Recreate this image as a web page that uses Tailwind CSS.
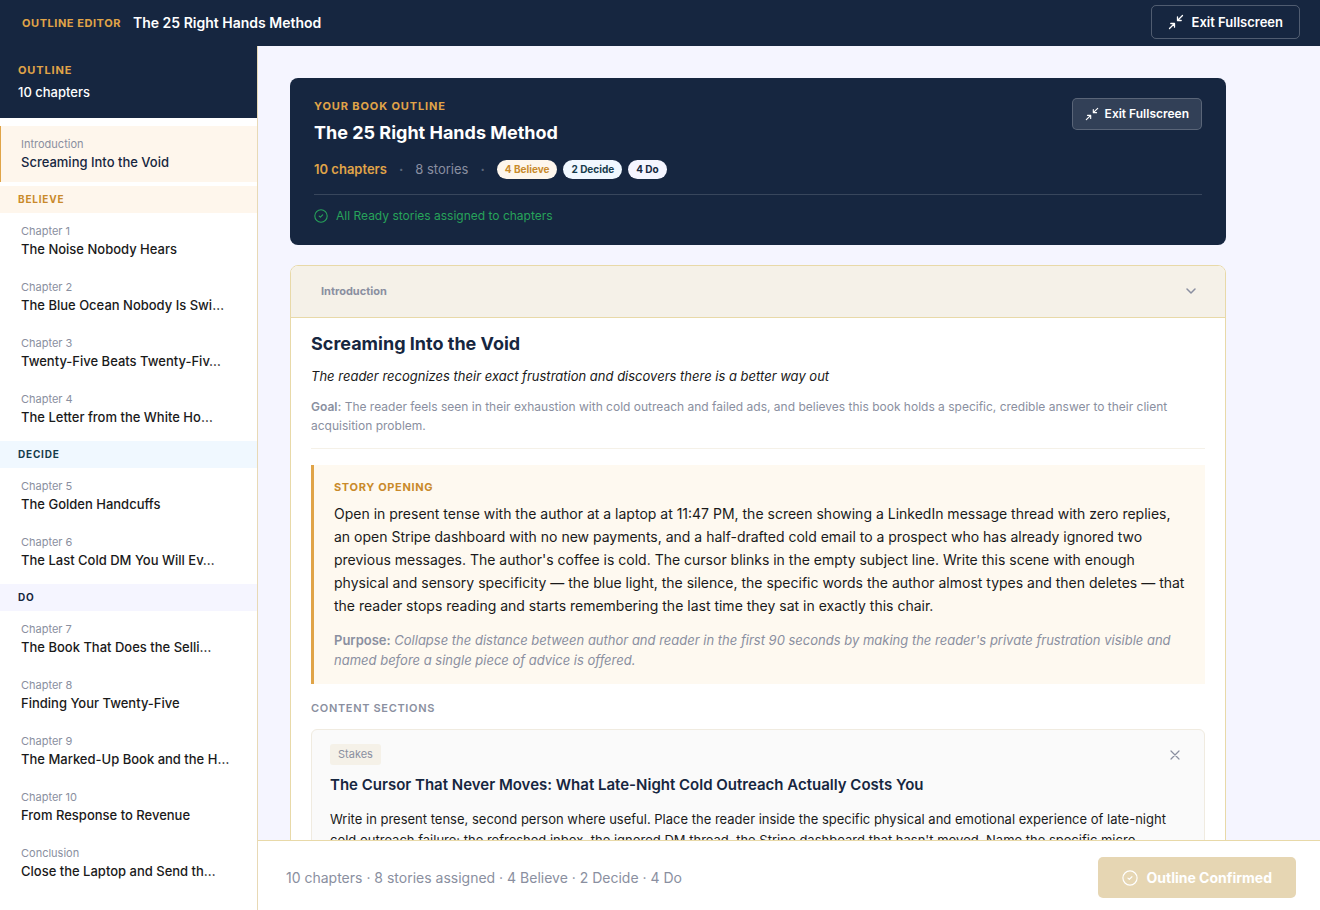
<!DOCTYPE html>
<html lang="en">
<head>
<meta charset="utf-8">
<meta name="viewport" content="width=device-width, initial-scale=1">
<title>Outline Editor</title>
<script src="https://cdn.jsdelivr.net/npm/@tailwindcss/browser@4"></script>
</head>
<body class="flex h-screen flex-col overflow-hidden bg-[#f5f5ff] font-[Inter,sans-serif] text-[#1a1a1a]">

<header class="flex h-[46px] shrink-0 items-center justify-between bg-[#162640] pr-5 pl-[22px]">
  <div class="flex items-center gap-3">
    <span class="text-[11px] leading-4 font-bold tracking-[0.55px] text-[#e0a448]">OUTLINE EDITOR</span>
    <span class="text-[14px] leading-5 font-semibold text-white">The 25 Right Hands Method</span>
  </div>
  <button type="button" class="-mt-0.5 flex h-[34px] items-center gap-2 rounded-[5px] border border-white/25 px-4 text-[13px] leading-5 font-semibold text-white">
    <svg class="size-4" viewBox="0 0 16 16" fill="none" stroke="currentColor" stroke-width="1.3" stroke-linecap="round" stroke-linejoin="round" aria-hidden="true"><path d="M1.500 14.500 6.500 9.500M2.800 9.500h3.700v3.700M14.500 1.500 9.500 6.500M9.500 2.800v3.700h3.700"/></svg>
    Exit Fullscreen
  </button>
</header>

<div class="flex min-h-0 flex-1">
  <aside class="w-[258px] shrink-0 overflow-y-auto border-r border-[#e8d9b5] bg-white [scrollbar-width:none]">
    <div class="h-[72px] bg-[#162640] px-[18px] pt-4">
      <div class="text-[11px] leading-4 font-bold tracking-[0.88px] text-[#e0a448]">OUTLINE</div>
      <div class="mt-1 text-[13px] leading-5 font-medium text-white">10 chapters</div>
    </div>
    <nav class="pt-2" aria-label="Chapters">
      <a href="#" aria-current="true" class="block h-14 border-l border-[#e0a448] bg-[#fef6ec] pt-[10px] pl-5"><span class="block text-[11px] leading-4 text-[#8a8fa0]">Introduction</span><span class="block text-[13px] leading-5 font-medium text-[#162640]">Screaming Into the Void</span></a>
      <h2 class="mt-1 h-[27px] bg-[#fef6ec] px-[18px] text-[10px] leading-[27px] font-bold tracking-[0.8px] text-[#c98a2b]">BELIEVE</h2>
      <a href="#" class="block h-14 border-l border-transparent pt-[10px] pl-5"><span class="block text-[11px] leading-4 text-[#8a8fa0]">Chapter 1</span><span class="block text-[13px] leading-5 font-medium">The Noise Nobody Hears</span></a>
      <a href="#" class="block h-14 border-l border-transparent pt-[10px] pl-5"><span class="block text-[11px] leading-4 text-[#8a8fa0]">Chapter 2</span><span class="block text-[13px] leading-5 font-medium">The Blue Ocean Nobody Is Swi…</span></a>
      <a href="#" class="block h-14 border-l border-transparent pt-[10px] pl-5"><span class="block text-[11px] leading-4 text-[#8a8fa0]">Chapter 3</span><span class="block text-[13px] leading-5 font-medium">Twenty-Five Beats Twenty-Fiv…</span></a>
      <a href="#" class="block h-14 border-l border-transparent pt-[10px] pl-5"><span class="block text-[11px] leading-4 text-[#8a8fa0]">Chapter 4</span><span class="block text-[13px] leading-5 font-medium">The Letter from the White Ho…</span></a>
      <h2 class="mt-1 h-[27px] bg-[#f0f8ff] px-[18px] text-[10px] leading-[27px] font-bold tracking-[0.8px] text-[#163c4c]">DECIDE</h2>
      <a href="#" class="block h-14 border-l border-transparent pt-[10px] pl-5"><span class="block text-[11px] leading-4 text-[#8a8fa0]">Chapter 5</span><span class="block text-[13px] leading-5 font-medium">The Golden Handcuffs</span></a>
      <a href="#" class="block h-14 border-l border-transparent pt-[10px] pl-5"><span class="block text-[11px] leading-4 text-[#8a8fa0]">Chapter 6</span><span class="block text-[13px] leading-5 font-medium">The Last Cold DM You Will Ev…</span></a>
      <h2 class="mt-1 h-[27px] bg-[#f5f5ff] px-[18px] text-[10px] leading-[27px] font-bold tracking-[0.8px] text-[#162640]">DO</h2>
      <a href="#" class="block h-14 border-l border-transparent pt-[10px] pl-5"><span class="block text-[11px] leading-4 text-[#8a8fa0]">Chapter 7</span><span class="block text-[13px] leading-5 font-medium">The Book That Does the Selli…</span></a>
      <a href="#" class="block h-14 border-l border-transparent pt-[10px] pl-5"><span class="block text-[11px] leading-4 text-[#8a8fa0]">Chapter 8</span><span class="block text-[13px] leading-5 font-medium">Finding Your Twenty-Five</span></a>
      <a href="#" class="block h-14 border-l border-transparent pt-[10px] pl-5"><span class="block text-[11px] leading-4 text-[#8a8fa0]">Chapter 9</span><span class="block text-[13px] leading-5 font-medium">The Marked-Up Book and the H…</span></a>
      <a href="#" class="block h-14 border-l border-transparent pt-[10px] pl-5"><span class="block text-[11px] leading-4 text-[#8a8fa0]">Chapter 10</span><span class="block text-[13px] leading-5 font-medium">From Response to Revenue</span></a>
      <a href="#" class="block h-14 border-l border-transparent pt-[10px] pl-5"><span class="block text-[11px] leading-4 text-[#8a8fa0]">Conclusion</span><span class="block text-[13px] leading-5 font-medium">Close the Laptop and Send th…</span></a>
    </nav>
  </aside>

  <div class="flex min-w-0 flex-1 flex-col">
    <main class="min-h-0 flex-1 overflow-y-auto [scrollbar-width:none]">
      <div class="flex max-w-[1000px] flex-col gap-5 p-8">

        <section class="rounded-lg bg-[#162640] px-6 pt-5 pb-[19px]">
          <div class="flex items-start justify-between">
            <div>
              <div class="text-[11px] leading-4 font-bold tracking-[0.88px] text-[#e0a448]">YOUR BOOK OUTLINE</div>
              <h1 class="mt-[5px] text-[18px] leading-7 font-bold text-white">The 25 Right Hands Method</h1>
            </div>
            <button type="button" class="flex h-8 items-center gap-1.5 rounded-[5px] border border-white/20 bg-white/12 px-3 text-[12px] leading-4 font-semibold text-white">
              <svg class="size-[14px]" viewBox="0 0 16 16" fill="none" stroke="currentColor" stroke-width="1.3" stroke-linecap="round" stroke-linejoin="round" aria-hidden="true"><path d="M1.500 14.500 6.500 9.500M2.800 9.500h3.700v3.700M14.500 1.500 9.500 6.500M9.500 2.800v3.700h3.700"/></svg>
              Exit Fullscreen
            </button>
          </div>
          <div class="mt-3 flex items-center text-[13px] leading-5">
            <span class="font-semibold text-[#e0a448]">10 chapters</span>
            <span class="mx-3 font-bold text-[#5c667a]">·</span>
            <span class="text-[#8a8fa0]">8 stories</span>
            <span class="mx-3 font-bold text-[#5c667a]">·</span>
            <span class="flex gap-1.5 text-[10px] leading-[19px] font-bold">
              <span class="rounded-full bg-[#fef6ec] px-2 text-[#c98a2b]">4 Believe</span>
              <span class="rounded-full bg-[#f0f8ff] px-2 text-[#163c4c]">2 Decide</span>
              <span class="rounded-full bg-[#f5f5ff] px-2 text-[#162640]">4 Do</span>
            </span>
          </div>
          <div class="mt-[15px] flex items-center gap-2 border-t border-white/15 pt-[11px] text-[12px] leading-5 text-[#27a35a]">
            <svg class="size-[14px]" viewBox="0 0 14 14" fill="none" stroke="currentColor" stroke-width="1.1" stroke-linecap="round" stroke-linejoin="round" aria-hidden="true"><circle cx="7" cy="7" r="6.200"/><path d="M5.200 7.100 6.400 8.200 8.700 5.900"/></svg>
            All Ready stories assigned to chapters
          </div>
        </section>

        <article class="overflow-hidden rounded-lg border border-[#e8d9a8] bg-white">
          <div class="flex h-[52px] items-center justify-between border-b border-[#e8d9a8] bg-[#f5f1e8] pr-7 pb-px pl-[30px]">
            <span class="text-[11px] leading-4 font-bold text-[#8a8fa0]">Introduction</span>
            <button type="button" aria-label="Collapse Introduction" class="text-[#8a8fa0]">
              <svg class="size-3" viewBox="0 0 12 12" fill="none" stroke="currentColor" stroke-width="1.500" stroke-linecap="round" stroke-linejoin="round" aria-hidden="true"><path d="m2 4 4 4 4-4"/></svg>
            </button>
          </div>
          <div class="px-5 pt-3 pb-5">
            <h2 class="text-[18px] leading-7 font-bold text-[#162640]">Screaming Into the Void</h2>
            <p class="mt-[7px] text-[13px] leading-[22px] italic">The reader recognizes their exact frustration and discovers there is a better way out</p>
            <p class="mt-2.5 border-b border-[#f5f1e8] pb-[13px] text-[12px] leading-[19px] text-[#8a8fa0]"><strong class="font-semibold">Goal:</strong> The reader feels seen in their exhaustion with cold outreach and failed ads, and believes this book holds a specific, credible answer to their client acquisition problem.</p>

            <section class="mt-4 border-l-[3px] border-[#e0a448] bg-[#fef9f0] px-5 pt-3.5 pb-3.5">
              <h3 class="text-[11px] leading-4 font-bold tracking-[0.66px] text-[#c98a2b]">STORY OPENING</h3>
              <p class="mt-[7px] text-[14px] leading-[23px]">Open in present tense with the author at a laptop at 11:47 PM, the screen showing a LinkedIn message thread with zero replies, an open Stripe dashboard with no new payments, and a half-drafted cold email to a prospect who has already ignored two previous messages. The author's coffee is cold. The cursor blinks in the empty subject line. Write this scene with enough physical and sensory specificity — the blue light, the silence, the specific words the author almost types and then deletes — that the reader stops reading and starts remembering the last time they sat in exactly this chair.</p>
              <p class="mt-[13px] text-[13px] leading-5 text-[#8a8fa0] italic"><strong class="font-semibold not-italic">Purpose:</strong> Collapse the distance between author and reader in the first 90 seconds by making the reader's private frustration visible and named before a single piece of advice is offered.</p>
            </section>

            <h3 class="mt-4 text-[11px] leading-4 font-semibold tracking-[0.66px] text-[#8a8fa0]">CONTENT SECTIONS</h3>

            <section class="mt-[13px] rounded-md border border-[#f0ebe0] bg-[#fafafa] px-[18px] pt-3.5 pb-4">
              <div class="flex items-center justify-between">
                <span class="rounded-[3px] bg-[#f5f1e8] px-2 text-[11px] leading-[21px] text-[#8a8fa0]">Stakes</span>
                <button type="button" aria-label="Remove section" class="mr-[5px] text-[#8a8fa0]">
                  <svg class="size-3" viewBox="0 0 12 12" fill="none" stroke="currentColor" stroke-width="1.200" stroke-linecap="round" aria-hidden="true"><path d="m2 2 8 8M10 2l-8 8"/></svg>
                </button>
              </div>
              <h4 class="mt-2 text-[15px] leading-6 font-semibold text-[#162640]">The Cursor That Never Moves: What Late-Night Cold Outreach Actually Costs You</h4>
              <p class="mt-3 text-[13px] leading-[21px]">Write in present tense, second person where useful. Place the reader inside the specific physical and emotional experience of late-night cold outreach failure: the refreshed inbox, the ignored DM thread, the Stripe dashboard that hasn't moved. Name the specific micro-</p>
            </section>
          </div>
        </article>
      </div>
    </main>

    <footer class="flex shrink-0 items-center justify-between border-t border-[#e8d9a8] bg-white pt-4 pr-6 pb-3 pl-7">
      <span class="text-[14px] leading-5 text-[#8a8fa0]">10 chapters · 8 stories assigned · 4 Believe · 2 Decide · 4 Do</span>
      <button type="button" class="flex h-[41px] items-center gap-2 rounded-[5px] bg-[#e6d6b3] px-6 text-[14px] leading-5 font-bold text-white">
        <svg class="size-4" viewBox="0 0 14 14" fill="none" stroke="currentColor" stroke-width="1" stroke-linecap="round" stroke-linejoin="round" aria-hidden="true"><circle cx="7" cy="7" r="6.200"/><path d="M5.200 7.100 6.400 8.200 8.700 5.900"/></svg>
        Outline Confirmed
      </button>
    </footer>
  </div>
</div>
</body>
</html>
